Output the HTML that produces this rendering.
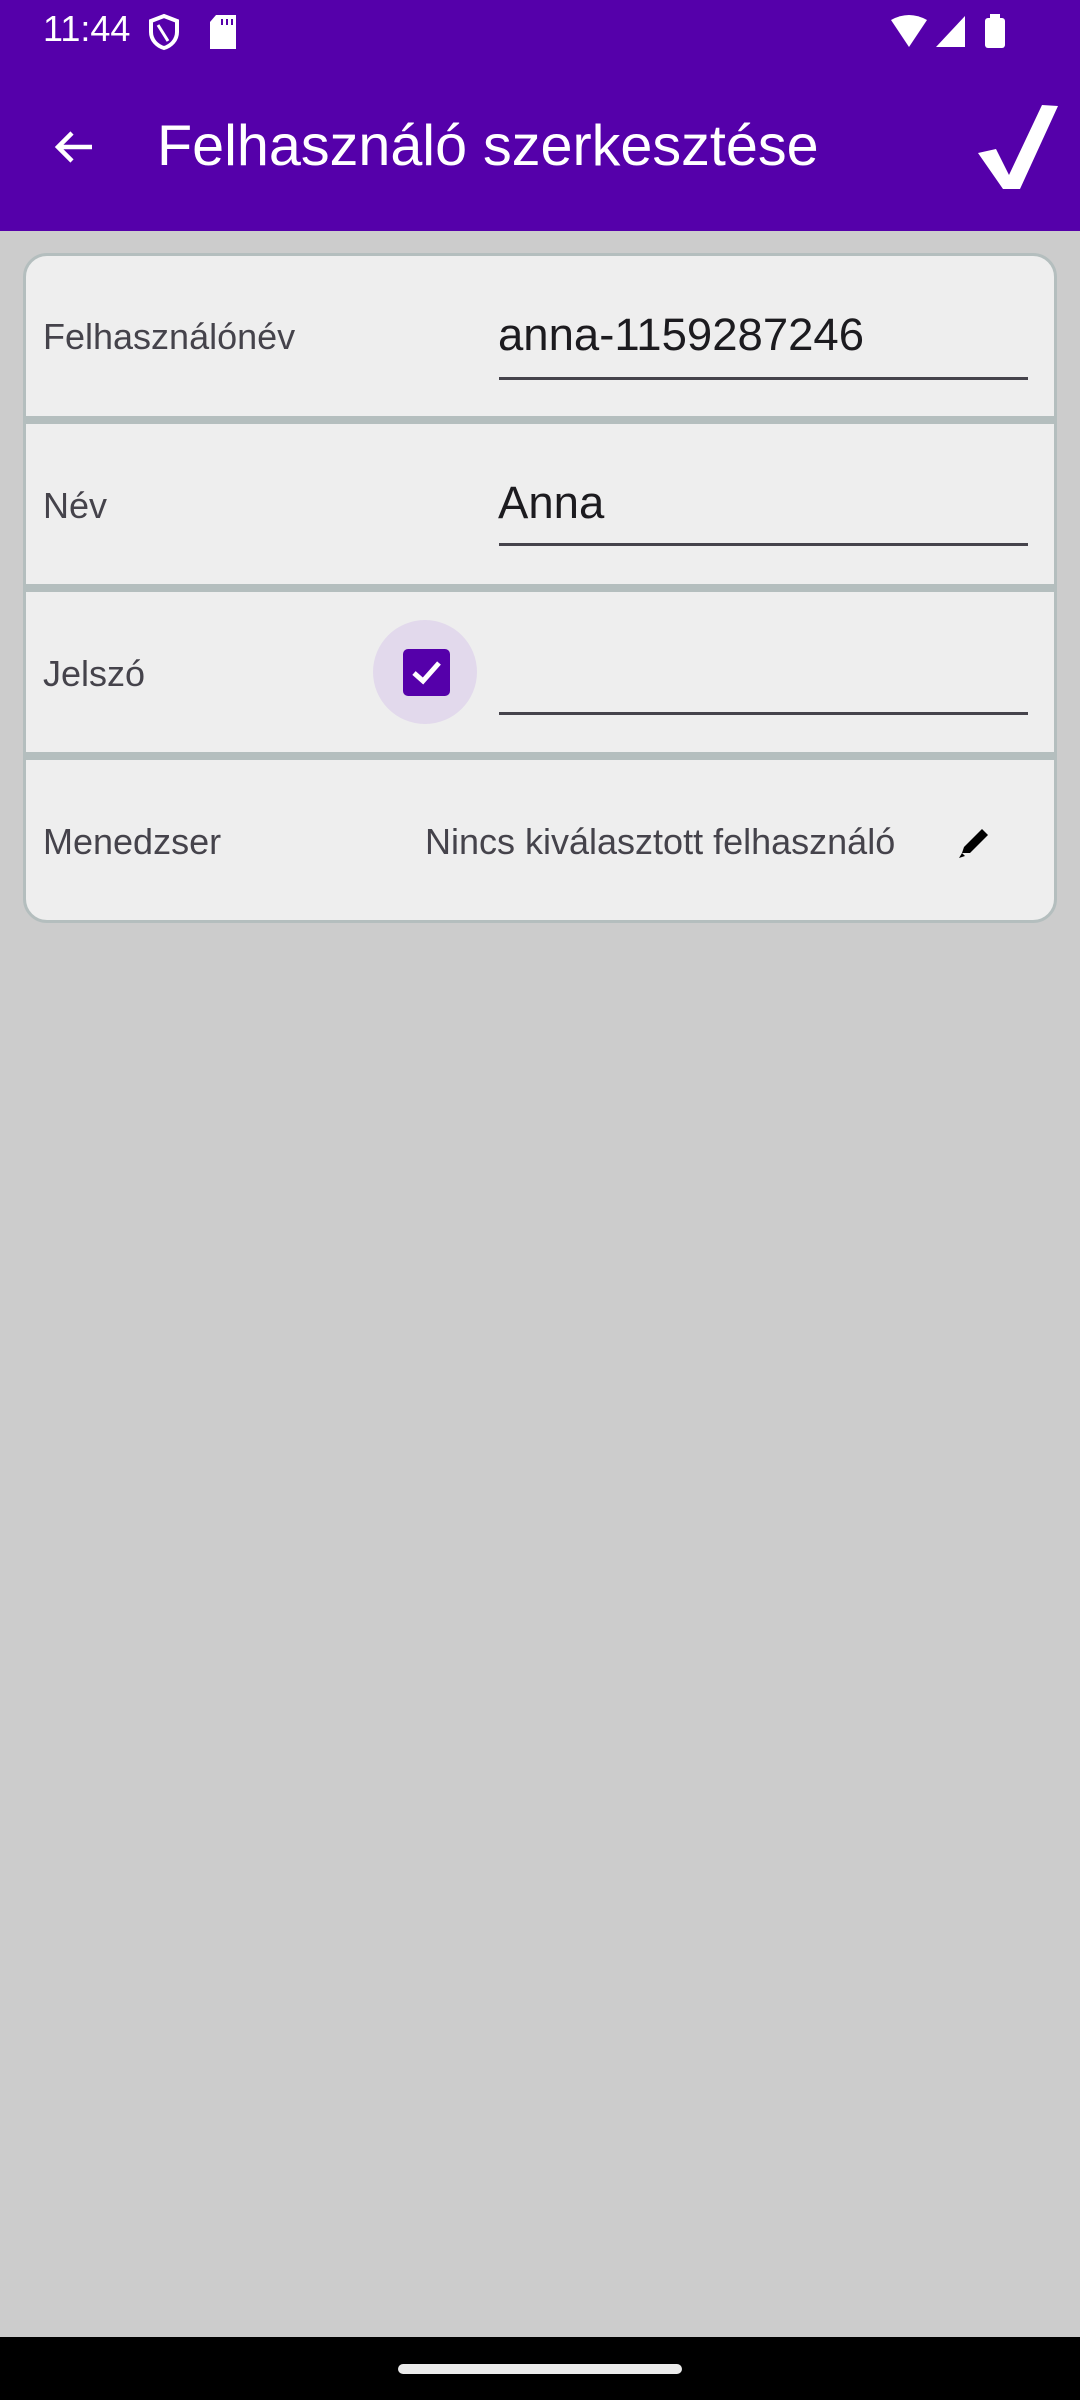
<!DOCTYPE html>
<html><head><meta charset="utf-8"><style>
*{margin:0;padding:0;box-sizing:border-box}
body{width:1080px;height:2400px;background:#cccccc;font-family:"Liberation Sans",sans-serif;position:relative;overflow:hidden}
.abs{position:absolute}
.hdr{left:0;top:0;width:1080px;height:231px;background:#5500aa}
.card{left:23px;top:253px;width:1034px;height:670px;background:#eeeeee;border:3px solid #b4bebe;border-radius:24px;overflow:hidden}
.sep{left:0;width:1034px;height:8px;background:#b4bebe}
.lbl{color:#45434b;font-size:36px}
.val{color:#1c1b1f;font-size:45.5px}
.ul{height:3px;background:#45434b;width:529px;left:473px}
</style></head><body>
<div class="abs hdr"></div>
<div class="abs" style="left:43px;top:8px;color:#fff;font-size:36px">11:44</div>
<svg class="abs" style="left:146px;top:13px" width="36" height="38" viewBox="0 0 36 38"><path d="M18 3 L31 8 V19 C31 27 25 33 18 35 C11 33 5 27 5 19 V8 Z" fill="none" stroke="#fff" stroke-width="4"/><path d="M12 12 L22 28" stroke="#fff" stroke-width="3"/></svg>
<svg class="abs" style="left:208px;top:15px" width="30" height="34" viewBox="0 0 30 34"><path d="M8 0 H28 V34 H2 V7 Z" fill="#fff"/><rect x="13" y="4" width="2" height="6" fill="#5500aa"/><rect x="18" y="4" width="2" height="6" fill="#5500aa"/><rect x="23" y="4" width="2" height="6" fill="#5500aa"/></svg>
<svg class="abs" style="left:888px;top:14px" width="120" height="36" viewBox="0 0 120 36"><path d="M3 6 Q21 -4 39 6 L21 33 Z" fill="#fff"/><path d="M77 2 V33 H48 Z" fill="#fff"/><rect x="97" y="4" width="20" height="30" rx="3" fill="#fff"/><rect x="102" y="0" width="10" height="5" fill="#fff"/></svg>
<svg class="abs" style="left:50px;top:125px" width="48" height="48" viewBox="0 0 48 48"><path d="M42 22 H10 M22 8 L8 22 L22 36" fill="none" stroke="#fff" stroke-width="4.5"/></svg>
<div class="abs" style="left:157px;top:113px;color:#fff;font-size:57.5px">Felhasználó szerkesztése</div>
<svg class="abs" style="left:972px;top:103px" width="90" height="88" viewBox="0 0 90 88"><path d="M6 50 L24 46 L37 72 L70 2 L86 3 L48 86 L31 86 Z" fill="#fff"/></svg>

<div class="abs card">
 <div class="abs sep" style="top:160px"></div>
 <div class="abs sep" style="top:328px"></div>
 <div class="abs sep" style="top:496px"></div>
 <div class="abs lbl" style="left:17px;top:60px">Felhasználónév</div>
 <div class="abs val" style="left:472px;top:53px">anna-1159287246</div>
 <div class="abs ul" style="top:121px"></div>
 <div class="abs lbl" style="left:17px;top:229px">Név</div>
 <div class="abs val" style="left:472px;top:221px">Anna</div>
 <div class="abs ul" style="top:287px"></div>
 <div class="abs" style="left:347px;top:364px;width:104px;height:104px;border-radius:50%;background:#e2d9ec"></div>
 <div class="abs" style="left:377px;top:393px;width:47px;height:47px;border-radius:5px;background:#5500aa"></div>
 <svg class="abs" style="left:377px;top:393px" width="47" height="47" viewBox="0 0 47 47"><path d="M11 24 L20 32 L36 14" fill="none" stroke="#fff" stroke-width="5"/></svg>
 <div class="abs lbl" style="left:17px;top:397px">Jelszó</div>
 <div class="abs ul" style="top:456px"></div>
 <div class="abs lbl" style="left:17px;top:565px">Menedzser</div>
 <div class="abs lbl" style="left:399px;top:565px">Nincs kiválasztott felhasználó</div>
 <svg class="abs" style="left:930px;top:567px" width="38" height="38" viewBox="0 0 38 38"><path d="M6 30 L8 24 L26 6 L32 12 L14 30 Z" fill="#000"/><path d="M3 35 L6 30 L9 33 Z" fill="#000"/></svg>
</div>
<div class="abs" style="left:0;top:2337px;width:1080px;height:63px;background:#000"></div>
<div class="abs" style="left:398px;top:2364px;width:284px;height:10px;border-radius:5px;background:#ebebeb"></div>
</body></html>
